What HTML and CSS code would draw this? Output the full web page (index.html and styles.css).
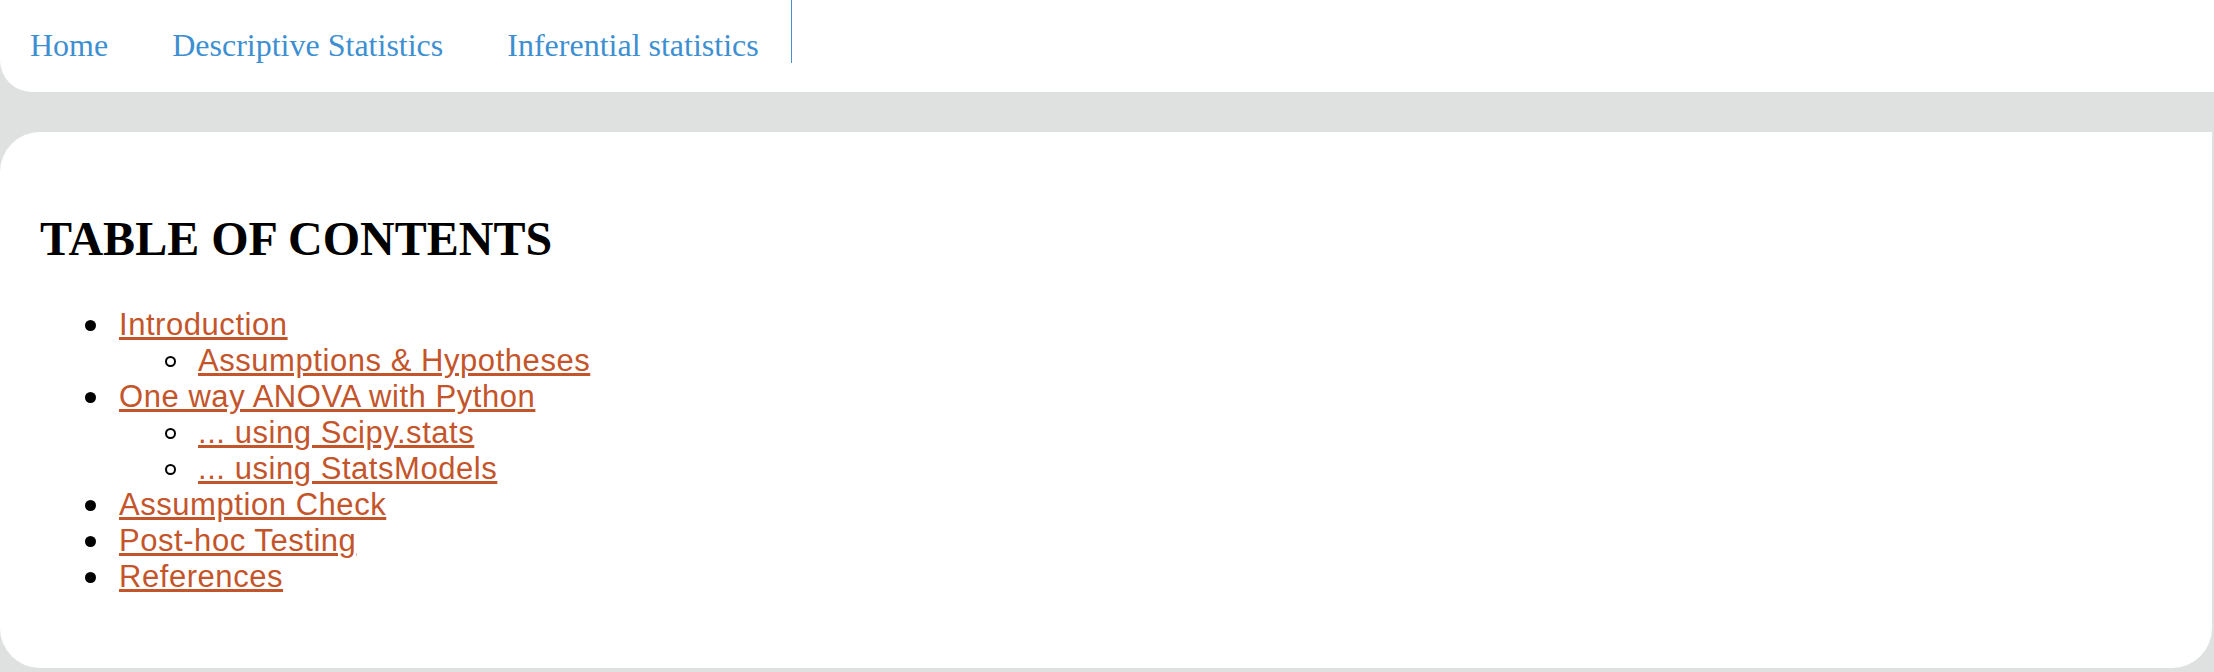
FILE: index.html
```html
<!DOCTYPE html>
<html lang="en">
<head>
<meta charset="utf-8">
<title>One way ANOVA</title>
<link rel="stylesheet" href="styles.css">
</head>
<body>
<header class="topnav">
  <nav class="menu">
    <a href="#" class="menu-link">Home</a>
    <a href="#" class="menu-link">Descriptive Statistics</a>
    <a href="#" class="menu-link menu-link-last">Inferential statistics</a>
  </nav>
</header>
<main class="card">
  <h1 class="toc-title">TABLE OF CONTENTS</h1>
  <ul class="toc">
    <li><a href="#" class="toc-link">Introduction</a>
      <ul class="toc-sub">
        <li><a href="#" class="toc-link">Assumptions &amp; Hypotheses</a></li>
      </ul>
    </li>
    <li><a href="#" class="toc-link">One way ANOVA with Python</a>
      <ul class="toc-sub">
        <li><a href="#" class="toc-link">... using Scipy.stats</a></li>
        <li><a href="#" class="toc-link">... using StatsModels</a></li>
      </ul>
    </li>
    <li><a href="#" class="toc-link">Assumption Check</a></li>
    <li><a href="#" class="toc-link">Post-hoc Testing</a></li>
    <li><a href="#" class="toc-link">References</a></li>
  </ul>
</main>
</body>
</html>
```
FILE: styles.css
```css
html, body {
  margin: 0;
  padding: 0;
}
body {
  background: #dfe1e0;
  overflow: hidden;
}
.topnav {
  background: #ffffff;
  height: 92px;
  border-bottom-left-radius: 32px;
}
.menu {
  display: flex;
  align-items: flex-start;
  padding-left: 30px;
}
.menu-link {
  font-family: "Liberation Serif", "Times New Roman", serif;
  font-size: 32px;
  line-height: 36px;
  padding-top: 27px;
  color: #3d8fd1;
  text-decoration: none;
  margin-right: 64px;
}
.menu-link-last {
  margin-right: 0;
  padding-right: 32px;
  border-right: 1px solid #4a90d0;
}
.card {
  background: #ffffff;
  margin: 40px 2px 0 0;
  border-radius: 40px 0 40px 40px;
  padding: 80px 40px 73px;
}
.toc-title {
  font-family: "Liberation Serif", "Times New Roman", serif;
  font-weight: bold;
  font-size: 48px;
  line-height: 54px;
  margin: 0 0 41px;
  color: #000;
}
.toc {
  margin: 0;
  padding-left: 79px;
  list-style: none;
  font-family: "Liberation Sans", Arial, sans-serif;
  font-size: 31px;
  line-height: 36px;
  letter-spacing: 0.55px;
  color: #000;
}
.toc-sub {
  margin: 0;
  padding-left: 79px;
  list-style: none;
}
.toc > li::before,
.toc-sub > li::before {
  content: "";
  display: inline-block;
  box-sizing: border-box;
  width: 11px;
  height: 11px;
  border-radius: 50%;
  margin-left: -34px;
  margin-right: 23px;
  vertical-align: 4px;
}
.toc > li::before {
  background: #000;
}
.toc-sub > li::before {
  background: transparent;
  border: 2px solid #000;
  margin-left: -33px;
  margin-right: 22px;
}
.toc-link {
  color: #c4552b;
  text-decoration: underline;
}
```
